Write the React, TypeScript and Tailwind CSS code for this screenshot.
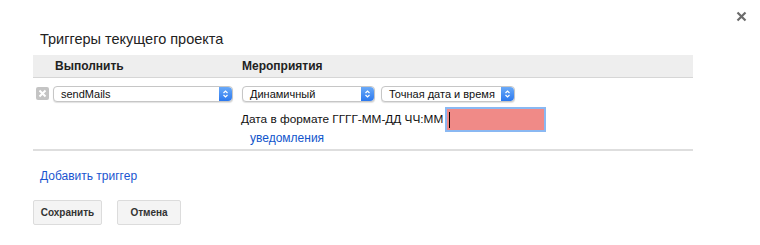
import React from "react";

function Arrow() {
  return (
    <div className="w-[13px] self-stretch rounded-r-[4px] bg-gradient-to-b from-[#6aaaf8] to-[#2b78ee] flex items-center justify-center">
      <svg width="7" height="10" viewBox="0 0 7 10">
        <path d="M1.5 4 L3.5 2 L5.5 4" stroke="white" strokeWidth="1.2" fill="none" />
        <path d="M1.5 6 L3.5 8 L5.5 6" stroke="white" strokeWidth="1.2" fill="none" />
      </svg>
    </div>
  );
}

function Select({ label, w }: { label: string; w: string }) {
  return (
    <div
      className={`${w} h-[16px] flex items-stretch bg-white border border-[#c6c6c6] rounded-[4px] shadow-[0_1px_1px_rgba(0,0,0,0.12)] text-[11px] leading-[14px]`}
    >
      <div className="flex-1 pl-[7px] flex items-center text-[#111] whitespace-nowrap overflow-hidden">{label}</div>
      <Arrow />
    </div>
  );
}

export default function App() {
  return (
    <div className="relative w-[760px] h-[245px] bg-white text-black font-['Liberation_Sans',Arial,sans-serif] text-[12px]">
      <div className="absolute left-[736px] top-[11px]">
        <svg width="11" height="11" viewBox="0 0 11 11">
          <path d="M1.5 1.5 L9.5 9.5 M9.5 1.5 L1.5 9.5" stroke="#6b6b6b" strokeWidth="2.2" />
        </svg>
      </div>
      <div className="pl-[33px] pr-[67px] pt-[30px]">
        <h1 className="pl-[7px] text-[14.5px] leading-[19px] text-[#222]">Триггеры текущего проекта</h1>
        <div className="mt-[6px] h-[23px] bg-[#eeeeee] border-b border-[#d6d6d6] flex items-center font-bold text-[12px] text-[#222]">
          <div className="w-[209px] pl-[22px]">Выполнить</div>
          <div>Мероприятия</div>
        </div>
        <div className="flex pt-[8px] border-b-2 border-[#dedede] pb-[3px]">
          <div className="w-[209px] flex items-start">
            <div className="ml-[3px] mt-[1px] w-[13px] h-[13px] rounded-[2px] bg-[#c4c4c4] flex items-center justify-center">
              <svg width="9" height="9" viewBox="0 0 9 9">
                <path d="M1.5 1.5 L7.5 7.5 M7.5 1.5 L1.5 7.5" stroke="white" strokeWidth="2" />
              </svg>
            </div>
            <div className="ml-[4px]">
              <Select label="sendMails" w="w-[180px]" />
            </div>
          </div>
          <div className="flex flex-col">
            <div className="flex gap-[6px]">
              <Select label="Динамичный" w="w-[133px]" />
              <Select label="Точная дата и время" w="w-[134px]" />
            </div>
            <div className="flex items-center mt-[5px] -ml-[1px]">
              <span className="text-[11.8px] text-[#111]">Дата в формате ГГГГ-ММ-ДД ЧЧ:ММ</span>
              <div className="ml-[2px] w-[101px] h-[25px] bg-[#f08a87] border-2 border-[#8ab8f2] flex items-center pl-[2px]">
                <div className="w-[1px] h-[16px] bg-black" />
              </div>
            </div>
            <a className="ml-[8px] -mt-[1px] text-[#1155cc] text-[12px] leading-[15px]">уведомления</a>
          </div>
        </div>
        <div className="pl-[7px] mt-[17px] text-[#1a55d0] text-[12px] leading-[16px]">Добавить триггер</div>
        <div className="flex gap-[15px] mt-[16px]">
          <button className="w-[69px] h-[25px] bg-[#f4f4f4] border border-[#dcdcdc] rounded-[2px] font-bold text-[10px] text-[#333]">Сохранить</button>
          <button className="w-[64px] h-[25px] bg-[#f4f4f4] border border-[#dcdcdc] rounded-[2px] font-bold text-[10px] text-[#333]">Отмена</button>
        </div>
      </div>
    </div>
  );
}
